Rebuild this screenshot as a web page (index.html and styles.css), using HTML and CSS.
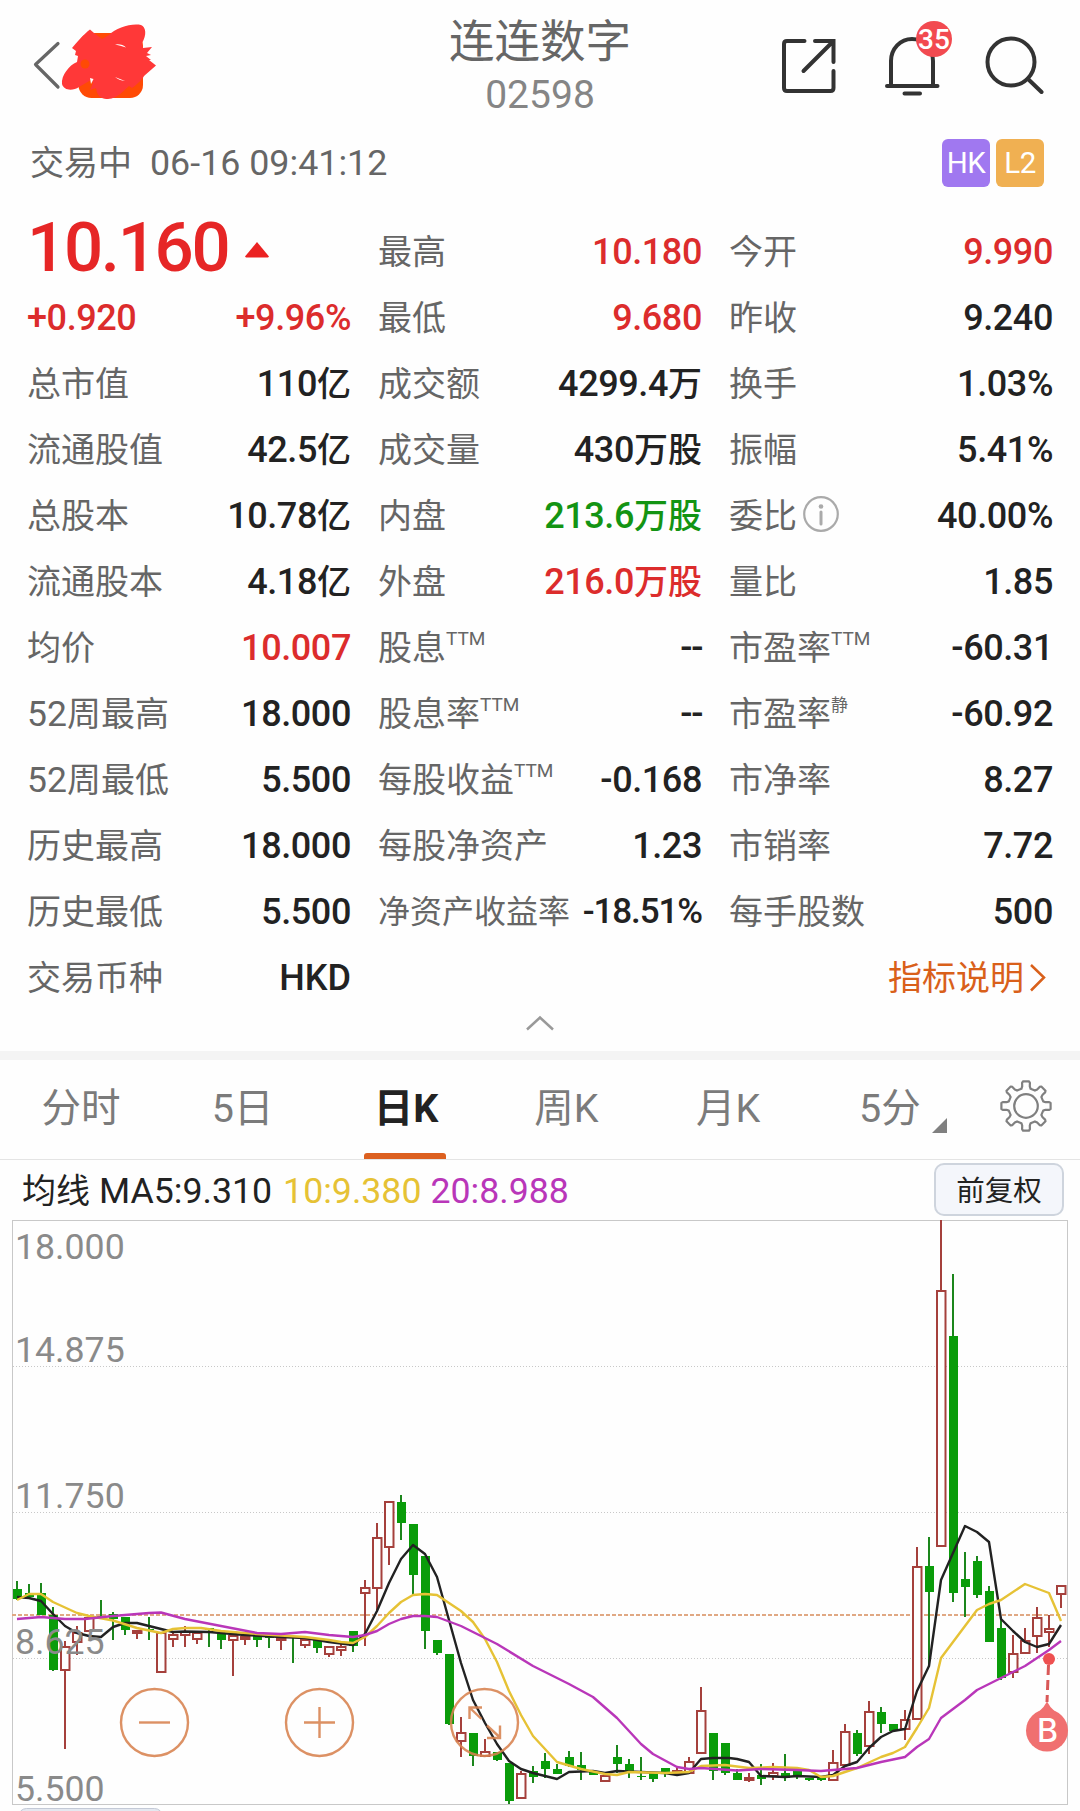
FILE: index.html
```html
<!DOCTYPE html>
<html lang="zh-CN">
<head>
<meta charset="UTF-8">
<meta name="viewport" content="width=device-width, initial-scale=1.0">
<title>连连数字 02598</title>
<link rel="stylesheet" href="styles.css">
</head>
<body>
    <header class="topbar">
        <svg class="back" width="140" height="90" viewBox="20 15 140 90">
            <path d="M58 43.5 35.500 64.500l22.5 22.5" fill="none" stroke="#666" stroke-width="3.2" stroke-linecap="round" stroke-linejoin="round"/>
            <rect x="78.5" y="33" width="64.5" height="65" rx="13" fill="#ff4a05"/>
            <path fill="#ff3838" d="M90 29.500 C84 34 77 42 72 48 L76 51 L75 55 L78 56 L77 62 C69 65 61 76 62 84 C64 91 73 91 79 87 L91 80 L93 83 L90 90 L96 88 C97 98 104 99 108 99 C118 98 122 92 129 86 L132 88 C139 83 143 78 144 76 L156 65.500 L149 60 L151 60 L146 56 L151 55 L147 53 L152 47 L143 48 L142 43 C147 35 146 27 141 25 C131 23 116 28 109 35 L102 39 L94 33 Z"/>
            <path fill="#fff" d="M115 44.500q7-1 11 3-6-2-11-3zM115 77q5 2 10 4-6-.5-10-4zM90 78l3.500 1-2.500 5z"/>
            <circle cx="85" cy="64" r="4.500" fill="#ff4a05"/>
        </svg>
        <div class="title">
            <div class="name">连连数字</div>
            <div class="code">02598</div>
        </div>
        <div class="actions">
            <svg width="58" height="58" viewBox="781 37 58 58">
                <g fill="none" stroke="#333" stroke-width="4" stroke-linecap="round">
                    <path d="M805.500 41H788q-3 0-3 3v44q0 3 3 3h43.500q3 0 3-3V71M816 41h18.500v21M833 42.500 804.500 71"/>
                </g>
            </svg>
            <div class="bell">
                <svg width="58" height="62" viewBox="883 34 58 62">
                    <g fill="none" stroke="#333" stroke-width="4" stroke-linecap="round">
                        <path d="M887 85h50.500M891 85V60a21 22 0 0 1 42 0v25M904.500 92.500H920"/>
                    </g>
                </svg>
                <span class="count">35</span>
            </div>
            <svg width="60" height="60" viewBox="984 36 60 60">
                <g fill="none" stroke="#333" stroke-width="4" stroke-linecap="round">
                    <circle cx="1011" cy="62" r="23.500"/>
                    <path d="M1028 79l13.500 13"/>
                </g>
            </svg>
        </div>
    </header>

    <div class="status">
        <span>交易中</span>
        <span class="time">06-16 09:41:12</span>
        <span class="tag hk">HK</span>
        <span class="tag l2">L2</span>
    </div>

    <section class="quote">
        <div class="col">
            <div class="row price">10.160<svg width="26" height="17" viewBox="0 0 26 17"><path d="M13 1 25 15.500 24 16.500H2L1 15.500Z" fill="#eb2222"/></svg></div>
            <div class="row up"><b>+0.920</b><b>+9.96%</b></div>
            <div class="row"><span>总市值</span><b>110<i>亿</i></b></div>
            <div class="row"><span>流通股值</span><b>42.5<i>亿</i></b></div>
            <div class="row"><span>总股本</span><b>10.78<i>亿</i></b></div>
            <div class="row"><span>流通股本</span><b>4.18<i>亿</i></b></div>
            <div class="row up"><span>均价</span><b>10.007</b></div>
            <div class="row"><span><em>52</em>周最高</span><b>18.000</b></div>
            <div class="row"><span><em>52</em>周最低</span><b>5.500</b></div>
            <div class="row"><span>历史最高</span><b>18.000</b></div>
            <div class="row"><span>历史最低</span><b>5.500</b></div>
            <div class="row"><span>交易币种</span><b class="unit">HKD</b></div>
        </div>
        <div class="col">
            <div class="row up"><span>最高</span><b>10.180</b></div>
            <div class="row up"><span>最低</span><b>9.680</b></div>
            <div class="row"><span>成交额</span><b>4299.4<i>万</i></b></div>
            <div class="row"><span>成交量</span><b>430<i>万股</i></b></div>
            <div class="row down"><span>内盘</span><b>213.6<i>万股</i></b></div>
            <div class="row up"><span>外盘</span><b>216.0<i>万股</i></b></div>
            <div class="row"><span>股息<sup>TTM</sup></span><b class="none">--</b></div>
            <div class="row"><span>股息率<sup>TTM</sup></span><b class="none">--</b></div>
            <div class="row"><span>每股收益<sup>TTM</sup></span><b>-0.168</b></div>
            <div class="row"><span>每股净资产</span><b>1.23</b></div>
            <div class="row tight"><span>净资产收益率</span><b>-18.51%</b></div>
        </div>
        <div class="col">
            <div class="row up"><span>今开</span><b>9.990</b></div>
            <div class="row"><span>昨收</span><b>9.240</b></div>
            <div class="row"><span>换手</span><b>1.03%</b></div>
            <div class="row"><span>振幅</span><b>5.41%</b></div>
            <div class="row"><span>委比<svg class="info" width="38" height="38" viewBox="0 0 38 38"><circle cx="19" cy="19" r="16.800" fill="none" stroke="#aaa" stroke-width="2.200"/><circle cx="19" cy="11.500" r="2.300" fill="#aaa"/><path d="M19 17v12" stroke="#aaa" stroke-width="3" stroke-linecap="round"/></svg></span><b>40.00%</b></div>
            <div class="row"><span>量比</span><b>1.85</b></div>
            <div class="row"><span>市盈率<sup>TTM</sup></span><b>-60.31</b></div>
            <div class="row"><span>市盈率<sup class="cn">静</sup></span><b>-60.92</b></div>
            <div class="row"><span>市净率</span><b>8.27</b></div>
            <div class="row"><span>市销率</span><b>7.72</b></div>
            <div class="row"><span>每手股数</span><b>500</b></div>
            <div class="row help">指标说明<svg width="20" height="30" viewBox="0 0 20 30"><path d="M3 2 16 14.500 3 27.500" fill="none" stroke="#d9601a" stroke-width="2.500"/></svg></div>
        </div>
    </section>
    <div class="collapse">
        <svg width="30" height="18" viewBox="0 0 30 18"><path d="M2 15.500 15 3.500l13 12" fill="none" stroke="#999" stroke-width="2.500"/></svg>
    </div>

    <nav class="tabs">
        <span class="tab">分时</span>
        <span class="tab">5日</span>
        <span class="tab active">日K</span>
        <span class="tab">周K</span>
        <span class="tab">月K</span>
        <span class="tab more">5分</span>
        <svg class="gear" width="54" height="54" viewBox="-27 -27 54 54">
            <g fill="none" stroke="#808080" stroke-width="2.200" stroke-linejoin="round">
                <path id="gear-path"/>
                <circle r="11.800"/>
            </g>
        </svg>
    </nav>

    <div class="ma">
        <span class="cn">均线</span>
        <span class="ma5">MA5:9.310</span>
        <span class="ma10">10:9.380</span>
        <span class="ma20">20:8.988</span>
        <button class="adjust">前复权</button>
    </div>

    <svg class="chart" width="1080" height="591" viewBox="0 1220 1080 591">
        <g class="grid">
            <path d="M13 1366.500H1067M13 1512.500H1067M13 1658.500H1067"/>
            <rect x="12.500" y="1220.500" width="1055" height="584"/>
        </g>
        <path class="last" d="M12 1615H1067"/>
        <g id="candles"></g>
        <polyline id="ma5" stroke="#222"/>
        <polyline id="ma10" stroke="#e6c235"/>
        <polyline id="ma20" stroke="#b936b9"/>
        <g class="axis">
            <text x="15" y="1259">18.000</text>
            <text x="15" y="1362">14.875</text>
            <text x="15" y="1508">11.750</text>
            <text x="15" y="1654">8.625</text>
            <text x="15" y="1801">5.500</text>
        </g>
        <g class="zoom">
            <circle cx="154.500" cy="1722.500" r="33.500"/>
            <path d="M139 1722.500h31"/>
            <circle cx="319.500" cy="1722.500" r="33.500"/>
            <path d="M304 1722.500h31M319.500 1707v31"/>
            <circle cx="484.500" cy="1722.500" r="33.500"/>
            <path d="M481.500 1719 469.500 1707.500M469.500 1719v-11.500h12.500M487 1725.500l13 12M500 1725.500v12.500h-13"/>
        </g>
        <g class="buy">
            <path d="M1048.500 1665 1047 1702" fill="none" stroke="#d95858" stroke-width="3" stroke-dasharray="10 5"/>
            <circle cx="1049" cy="1659" r="6" fill="#ee5050"/>
            <path d="M1047 1701.500q3 6 8 10h-16q5-4 8-10z"/>
            <circle cx="1047" cy="1730.500" r="21"/>
            <text x="1047.500" y="1742">B</text>
        </g>
        <rect x="18.500" y="1808.500" width="144" height="40" rx="8" fill="#e4e8f0" stroke="#c3c9d6"/>
    </svg>

    <script src="chart.js"></script>
</body>
</html>
```
FILE: styles.css
```css
* {
    box-sizing: border-box;
}
body {
    margin: 0;
    width: 1080px;
    height: 1811px;
    overflow: hidden;
    background: #fefefe;
    color: #666;
    font-family: Roboto, "Noto Sans CJK SC", sans-serif;
    font-size: 34px;
}
svg {
    display: block;
    flex: none;
}

/* Header */
.topbar {
    height: 128px;
    padding: 15px 35px 0 20px;
    display: grid;
    grid-template-columns: 1fr auto 1fr;
}
.title {
    width: 200px;
    margin-left: 15px;
    padding-top: 3px;
    text-align: center;
}
.name {
    font-size: 45.5px;
    line-height: 50px;
}
.code {
    margin-top: 4px;
    font-size: 39px;
    line-height: 46px;
    color: #858585;
}
.actions {
    display: flex;
    justify-content: flex-end;
    align-items: flex-start;
    gap: 44px;
    padding-top: 20px;
}
.actions > svg:first-child {
    margin: 2px 1px 0 -1px;
}
.actions > svg:last-child {
    margin: 1px 1px 0 -1px;
}
.bell {
    position: relative;
}
.count {
    position: absolute;
    left: 33px;
    top: -14px;
    width: 36px;
    height: 36px;
    border-radius: 50%;
    background: #f24a50;
    color: #fff;
    font-size: 28px;
    font-weight: 500;
    line-height: 37px;
    text-align: center;
}

/* Trading status */
.status {
    display: flex;
    align-items: center;
    height: 70px;
    padding: 0 36px 0 30px;
    line-height: 48px;
}
.time {
    margin: 0 auto 0 18px;
    font-size: 35.8px;
}
.tag {
    width: 48px;
    height: 48px;
    margin-left: 6px;
    border-radius: 6px;
    color: #fff;
    font-size: 29.5px;
    letter-spacing: -.5px;
    text-align: center;
}
.hk {
    background: #a078f0;
}
.l2 {
    background: #f0b052;
}

/* Quote table */
.quote {
    display: grid;
    grid-template-columns: repeat(3, 324px);
    gap: 27px;
    padding: 21px 27px 0;
}
.row {
    display: flex;
    justify-content: space-between;
    height: 66px;
    line-height: 66px;
    white-space: nowrap;
}
.row b {
    color: #222;
    font-size: 36px;
    font-weight: 500;
    letter-spacing: -.4px;
}
.row i {
    font-size: 34px;
    font-style: normal;
    letter-spacing: 0;
}
.row em {
    font-size: 35.5px;
    font-style: normal;
}
.row.up b {
    color: #dc2c2c;
}
.row.down b {
    color: #139413;
}
.row.price {
    justify-content: flex-start;
    align-items: center;
    gap: 16px;
    color: #e62626;
    font-size: 69px;
    font-weight: 500;
    letter-spacing: -2.3px;
    line-height: 58px;
    padding-bottom: 9px;
}
.row.price svg {
    margin-top: 3px;
}
.row sup {
    font-size: 19px;
    line-height: 0;
    vertical-align: 15px;
}
.row sup.cn {
    font-size: 17px;
}
.row .none {
    letter-spacing: -1.4px;
}
.row .unit {
    letter-spacing: 0;
}
.tight span {
    font-size: 32px;
}
.tight b {
    font-size: 35px;
    letter-spacing: -1.1px;
}
.info {
    display: inline-block;
    margin-left: 5px;
    vertical-align: -5px;
}
.row.help {
    justify-content: flex-end;
    align-items: center;
    gap: 4px;
    padding-right: 5px;
    color: #d9601a;
}
.collapse {
    height: 40px;
    padding: 3px 0 0 525px;
}

/* Period tabs */
.tabs {
    display: flex;
    height: 109px;
    border-top: 9px solid #f4f4f4;
    border-bottom: 1px solid #e4e4e4;
    color: #7b7b7b;
    font-size: 39.5px;
    line-height: 97px;
}
.tab {
    position: relative;
    width: 161.8px;
    text-align: center;
}
.tab.active {
    padding-left: 3px;
    color: #222;
    font-weight: 700;
}
.tab.active::after {
    content: "";
    position: absolute;
    left: 40px;
    bottom: 0;
    width: 82px;
    height: 6px;
    border-radius: 3px 3px 0 0;
    background: #dc6020;
}
.more::after {
    content: "";
    position: absolute;
    right: 24px;
    bottom: 26px;
    border-left: 15px solid transparent;
    border-bottom: 15px solid #808080;
}
.gear {
    margin: 19px 0 0 28px;
}

/* Moving averages */
.ma {
    display: flex;
    align-items: center;
    height: 60px;
    padding: 2px 16px 0 22px;
    color: #222;
    font-size: 35.7px;
    line-height: 64px;
}
.ma .cn {
    font-size: 34px;
}
.ma5 {
    margin: 0 11px 0 9px;
}
.ma10 {
    margin-right: 9px;
    color: #e6c235;
}
.ma20 {
    color: #b936b9;
}
.adjust {
    width: 130px;
    height: 53px;
    margin: -3px 0 0 auto;
    padding: 5px 0 0;
    border: 2px solid #ced4dd;
    border-radius: 10px;
    background: #f4f6fb;
    color: #222;
    font: 28.5px/1 Roboto, "Noto Sans CJK SC", sans-serif;
}

/* K line chart */
.grid {
    fill: none;
    stroke: #c8c8c8;
    stroke-width: 1;
}
.grid path {
    stroke-dasharray: 1 2;
}
.last {
    stroke: #e0a883;
    stroke-width: 1.8;
    stroke-dasharray: 4 2;
}
.rise {
    stroke: #a5403c;
    stroke-width: 2;
    fill: #fefefe;
}
.fall {
    stroke: #1c861c;
    stroke-width: 2;
    fill: #0a9c0a;
}
.fall rect {
    stroke: none;
}
.chart polyline {
    fill: none;
    stroke-width: 2.4;
    stroke-linejoin: round;
}
.axis {
    fill: #8a8a8a;
    font-size: 35.7px;
}
.zoom {
    fill: none;
    stroke: #d8824f;
    stroke-width: 2.4;
    opacity: .88;
}
.buy {
    fill: #f07070;
}
.buy text {
    fill: #fff;
    font: 500 32px Inter, sans-serif;
    text-anchor: middle;
}
```
FILE: chart.js
```js
// direction, high, body top, body bottom, low
const candles = [
    ['d',1581,1589,1599,1600],['d',1584,1593,1597,1597],['d',1583,1593,1615,1615],['d',1607,1615,1670,1671],
    ['u',1641,1647,1670,1749],['u',1626,1633,1642,1655],['u',1618,1618,1631,1631],['d',1600,1616,1617,1617],
    ['d',1612,1614,1619,1640],['d',1617,1617,1630,1635],['u',1630,1631,1633,1639],['d',1617,1629,1630,1640],
    ['u',1632,1633,1672,1673],['u',1632,1635,1639,1647],['u',1626,1632,1635,1647],['u',1632,1633,1639,1644],
    ['d',1628,1628,1630,1647],['d',1634,1634,1640,1649],['u',1635,1636,1640,1676],['u',1634,1637,1639,1645],
    ['d',1633,1633,1640,1647],['d',1635,1636,1638,1648],['u',1637,1638,1640,1650],['d',1636,1636,1638,1663],
    ['u',1639,1640,1645,1648],['d',1640,1640,1648,1653],['u',1646,1647,1654,1657],['u',1644,1647,1650,1656],
    ['d',1631,1631,1646,1652],['u',1580,1588,1593,1646],['u',1523,1538,1588,1610],['u',1501,1502,1547,1565],
    ['d',1495,1502,1523,1540],['d',1524,1524,1575,1596],['d',1556,1556,1631,1649],['d',1640,1640,1653,1655],
    ['d',1654,1654,1724,1725],['u',1717,1733,1741,1757],['d',1733,1733,1756,1766],['u',1739,1752,1756,1757],
    ['d',1752,1752,1760,1761],['d',1763,1763,1801,1804],['u',1771,1774,1798,1799],['d',1766,1771,1777,1783],
    ['d',1753,1761,1769,1778],['d',1764,1769,1774,1774],['d',1751,1757,1766,1767],['d',1752,1765,1770,1780],
    ['d',1772,1772,1775,1775],['u',1775,1776,1781,1782],['d',1745,1757,1764,1773],['d',1759,1764,1771,1778],
    ['d',1757,1776,1777,1780],['d',1773,1773,1779,1782],['d',1768,1768,1773,1777],['u',1767,1771,1773,1773],
    ['u',1757,1762,1773,1774],['u',1687,1711,1753,1754],['d',1733,1733,1771,1780],['d',1743,1743,1773,1775],
    ['d',1769,1773,1780,1780],['u',1773,1778,1780,1782],['d',1764,1775,1779,1785],['u',1763,1773,1776,1780],
    ['d',1754,1773,1778,1781],['d',1767,1771,1777,1779],['d',1778,1778,1780,1781],['d',1778,1778,1780,1781],
    ['u',1750,1763,1780,1781],['u',1724,1732,1765,1766],['d',1730,1733,1754,1756],['u',1701,1712,1746,1754],
    ['d',1707,1712,1724,1733],['d',1724,1724,1731,1731],['u',1710,1720,1729,1740],['u',1547,1567,1719,1720],
    ['d',1537,1566,1592,1665],['u',1220,1291,1546,1547],['d',1274,1336,1593,1602],['d',1552,1579,1587,1617],
    ['d',1556,1561,1595,1598],['d',1586,1591,1642,1642],['d',1619,1628,1678,1680],['u',1635,1654,1672,1678],
    ['u',1628,1641,1653,1654],['u',1607,1618,1636,1653],['u',1615,1629,1632,1647],['u',1585,1586,1594,1608]
];

let html = '';
candles.forEach(function([dir, high, top, bottom, low], i) {
    const x = 17 + i * 12;
    if (dir === 'u') {
        html += `<g class="rise"><path d="M${x} ${high}V${top}M${x} ${bottom}V${low}"/>` +
            `<rect x="${x - 4}" y="${top}" width="8.500" height="${bottom - top}"/></g>`;
    } else {
        html += `<g class="fall"><path d="M${x} ${high}V${low}"/>` +
            `<rect x="${x - 4}" y="${top}" width="9" height="${bottom - top}"/></g>`;
    }
});
document.getElementById('candles').innerHTML = html;

const lines = {
    ma5: '17,1597 29,1598 41,1601 53,1614 65,1626 77,1633 89,1636 101,1637 113,1627 125,1623 137,1623 149,1626 161,1629 173,1632 185,1631.5 209,1632 245,1635 281,1637 305,1638 329,1642 341,1643.5 353,1645 365,1634 377,1611 389,1583 401,1559 413,1545 425,1554 437,1577 449,1620 461,1663 473,1700 485,1723 497,1744 509,1761 521,1769 533,1773 545,1776 557,1779 569,1772 593,1771 605,1773 617,1771 641,1772 665,1773 677,1775 689,1773 701,1759 713,1758 729,1758 737,1759 749,1762 761,1776 785,1777 797,1776 821,1777 833,1775 845,1766 857,1762 869,1748 881,1737 893,1731 905,1729 917,1691 929,1666 941,1580 965,1526 977,1532 989,1542 1001,1619 1013,1631 1025,1642 1037,1647 1049,1644 1061,1625',
    ma10: '17,1600 29,1594 41,1594 53,1602 77,1613 89,1616 113,1620.5 137,1628 161,1633 173,1629 185,1628 201,1628 221,1631 257,1634 305,1637 329,1640 341,1642 353,1643 365,1637 377,1626 389,1613 401,1602 413,1595 425,1594 437,1595 449,1603 461,1611 473,1622 485,1639 497,1662 509,1691 521,1715 533,1736 557,1762 581,1769 605,1774 617,1775 629,1772 665,1773 689,1772 701,1766 725,1765 749,1768 773,1767 797,1768 809,1770 821,1777 833,1776 857,1768 881,1757 893,1753 905,1747 917,1728 929,1708 941,1658 953,1642 977,1610 989,1604 1001,1600 1025,1584 1049,1593 1061,1621',
    ma20: '17,1619 41,1617 65,1619 85,1619 113,1616 149,1613 161,1612.5 185,1619 221,1626 257,1633 281,1634 305,1632 329,1635 353,1637 365,1635 377,1631 389,1624 401,1619 413,1616 425,1616 437,1617 461,1626 497,1644 533,1666 569,1684 593,1697 617,1718 641,1744 653,1754 677,1767 689,1769 701,1768 737,1770.5 761,1769 797,1770 821,1771 857,1768 881,1762 905,1757 917,1747 929,1739 941,1718 965,1700 977,1690 1001,1678 1025,1666 1049,1650 1061,1641'
};
for (const id in lines) {
    document.getElementById(id).setAttribute('points', lines[id]);
}

// settings gear, 8 teeth
let gear = '';
for (let k = 0; k < 8; k++) {
    [[-15, 17.8], [-11, 20], [-9.5, 23.5], [-7, 24.8], [7, 24.8], [9.5, 23.5], [11, 20], [15, 17.8]].forEach(function([deg, r]) {
        const a = (k * 45 + deg) * Math.PI / 180;
        gear += (gear ? 'L' : 'M') + (r * Math.sin(a)).toFixed(1) + ' ' + (-r * Math.cos(a)).toFixed(1);
    });
}
document.getElementById('gear-path').setAttribute('d', gear + 'Z');
```
